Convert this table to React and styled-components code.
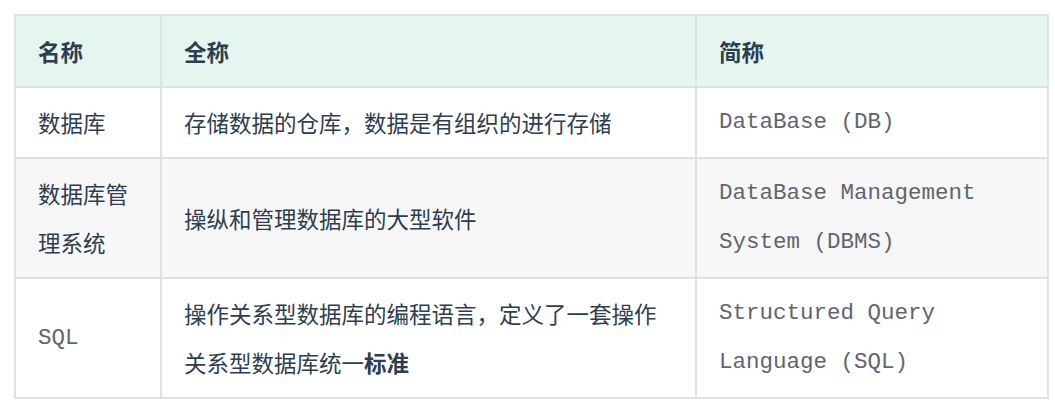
import styled, { createGlobalStyle } from "styled-components";

const GlobalStyle = createGlobalStyle`
  body {
    margin: 0;
    background: #ffffff;
    font-family: "Noto Sans CJK SC", "Noto Sans", sans-serif;
  }
`;

const rows = [
  {
    name: "数据库",
    full: "存储数据的仓库，数据是有组织的进行存储",
    short: "DataBase (DB)",
  },
  {
    name: "数据库管理系统",
    full: "操纵和管理数据库的大型软件",
    short: "DataBase Management System (DBMS)",
  },
  {
    name: "SQL",
    mono: true,
    full: (
      <>
        操作关系型数据库的编程语言，定义了一套操作关系型数据库统一<strong>标准</strong>
      </>
    ),
    short: "Structured Query Language (SQL)",
  },
];

export default function App() {
  return (
    <Page>
      <GlobalStyle />
      <Table>
        <colgroup>
          <col style={{ width: 146 }} />
          <col style={{ width: 535 }} />
          <col style={{ width: 352 }} />
        </colgroup>
        <thead>
          <HeadRow>
            <Th>名称</Th>
            <Th>全称</Th>
            <Th>简称</Th>
          </HeadRow>
        </thead>
        <tbody>
          {rows.map((row, index) => (
            <Row key={index} striped={index % 2 === 1}>
              <Td>{row.mono ? <Code>{row.name}</Code> : row.name}</Td>
              <Td>{row.full}</Td>
              <Td>
                <Code>{row.short}</Code>
              </Td>
            </Row>
          ))}
        </tbody>
      </Table>
    </Page>
  );
}

const Page = styled.div`
  padding: 14px;
`;

const Table = styled.table`
  width: 1033px;
  table-layout: fixed;
  border-collapse: collapse;
  font-size: 22.5px;
  line-height: 49px;
  color: #2c3e50;
`;

const HeadRow = styled.tr`
  background-color: #e5f6ee;
`;

const Row = styled.tr`
  background-color: ${(props) => (props.striped ? "#f7f7f7" : "#ffffff")};
`;

const Th = styled.th`
  border: 2px solid #dfe2e5;
  padding: 10px 22px;
  height: 50px;
  text-align: left;
  font-weight: 700;
  vertical-align: middle;
`;

const Td = styled.td`
  border: 2px solid #dfe2e5;
  padding: 10px 22px;
  vertical-align: middle;
  word-break: break-all;

  strong {
    font-weight: 700;
  }
`;

const Code = styled.span`
  font-family: "Liberation Mono", "DejaVu Sans Mono", monospace;
  font-size: 22.5px;
  line-height: 49px;
  vertical-align: top;
  color: #60656e;
  word-break: normal;
`;
